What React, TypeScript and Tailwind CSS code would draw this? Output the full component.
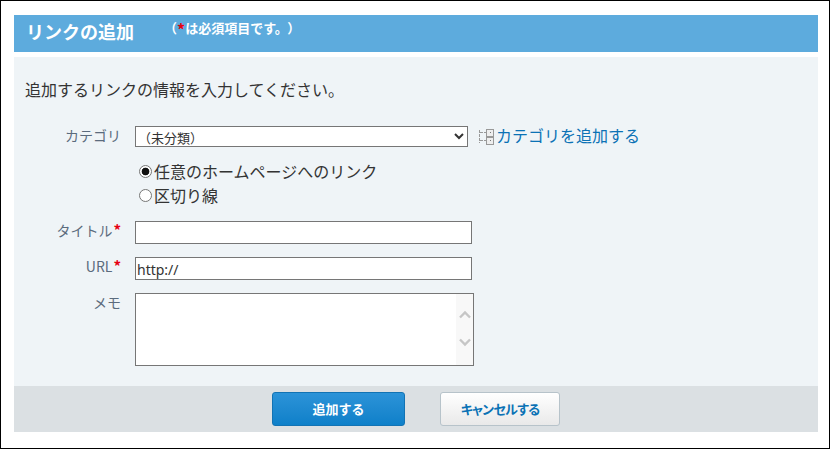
import React from "react";

const font = { fontFamily: '"Noto Sans CJK JP", "Noto Sans", sans-serif' };

function TreeIcon() {
  return (
    <svg width="15" height="16" viewBox="0 0 15 16" className="shrink-0" fill="none" stroke="#999999" strokeWidth="1" shapeRendering="crispEdges">
      <rect x="7.5" y="0.5" width="7" height="6.5" fill="#eeeeee" />
      <rect x="7.5" y="8.5" width="7" height="6.5" fill="#eeeeee" />
      <rect x="10.5" y="3" width="1" height="1" fill="#777777" stroke="none" />
      <rect x="10.5" y="11" width="1" height="1" fill="#777777" stroke="none" />
      <path d="M0.5 1v13M1 3.5h6M1 11.5h6" strokeDasharray="3 1" />
    </svg>
  );
}

function Label({ text, required }: { text: string; required?: boolean }) {
  return (
    <div className="-ml-[11px] -mt-[1px] w-[107px] shrink-0 text-right text-[14px] leading-[20px] text-[#5b6b7d]">
      {text}
      {required && <span className="ml-[1px] text-[15px] font-bold text-[#e60012]">*</span>}
    </div>
  );
}

const radioClass =
  "m-0 mr-[2px] box-border h-[13px] w-[13px] appearance-none rounded-full border border-[#767676] bg-white checked:bg-[radial-gradient(circle,#111111_0,#111111_3.5px,#ffffff_4.2px)]";

export default function App() {
  return (
    <div style={font} className="box-border h-[449px] w-[830px] border border-black bg-white pl-[13px] pr-[11px] pt-[14px]">
      <div className="flex h-[37px] items-start bg-[#5dabdd] pl-[12px] text-white">
        <div className="mt-[3px] w-[138px] text-[18px] leading-[26px] font-bold">リンクの追加</div>
        <div className="mt-[4px] text-[13px] leading-[18px] font-bold">
          （<span className="align-[-3px] text-[16px] text-[#e60012]">*</span>は必須項目です。<span className="ml-[6px]">）</span>
        </div>
      </div>
      <div className="mt-[5px] h-[329px] bg-[#eff4f7] pl-[11px] pt-[21px]">
        <div className="text-[16px] leading-[22px] text-[#333333]">追加するリンクの情報を入力してください。</div>
        <div className="mt-[26px] flex h-[21px] items-start">
          <Label text="カテゴリ" />
          <select className="ml-[14px] box-border h-[21px] w-[333px] border border-[#767676] bg-white pl-0 indent-[-2px] text-[13px] leading-[17px] text-[#333333] [appearance:auto]" style={font}>
            <option>（未分類）</option>
          </select>
          <div className="ml-[11px] flex items-center">
            <TreeIcon />
            <a className="ml-[2px] -mt-[3px] text-[16px] leading-[24px] text-[#0b72b5]">カテゴリを追加する</a>
          </div>
        </div>
        <div className="mt-[12px] ml-[114px] text-[16px] leading-[24px] text-[#333333]">
          <label className="flex h-[24px] items-center">
            <input type="radio" name="kind" defaultChecked className={radioClass} />
            任意のホームページへのリンク
          </label>
          <label className="flex h-[24px] items-center">
            <input type="radio" name="kind" className={radioClass} />
            区切り線
          </label>
        </div>
        <div className="mt-[14px] flex h-[23px] items-start">
          <Label text="タイトル" required />
          <input className="ml-[14px] box-border h-[23px] w-[337px] border border-[#767676] bg-white" />
        </div>
        <div className="mt-[13px] flex h-[23px] items-start">
          <Label text="URL" required />
          <input defaultValue="http://" className="ml-[14px] box-border h-[23px] w-[337px] border border-[#767676] bg-white pl-[1px] pt-[2px] text-[14px] text-[#333333] outline-none" style={{ fontFamily: '"Noto Sans", sans-serif' }} />
        </div>
        <div className="mt-[13px] flex items-start">
          <Label text="メモ" />
          <div className="ml-[14px] box-border flex h-[73px] w-[339px] border border-[#767676] bg-white">
            <textarea className="min-w-0 flex-1 resize-none bg-white outline-none" />
            <div className="flex w-[17px] flex-col items-center bg-[#f8f8f8] pt-[16px] text-[#c6c6c6]">
              <svg width="12" height="9" viewBox="0 0 12 9" fill="none" stroke="currentColor" strokeWidth="2.4"><path d="M1 7.5l5-5 5 5" /></svg>
              <svg className="mt-[19px]" width="12" height="9" viewBox="0 0 12 9" fill="none" stroke="currentColor" strokeWidth="2.4"><path d="M1 1.5l5 5 5-5" /></svg>
            </div>
          </div>
        </div>
      </div>
      <div className="flex h-[46px] items-start bg-[#dbe0e3] pl-[258px] pt-[6px]">
        <button className="box-border h-[34px] w-[133px] rounded-[3px] border border-[#1273b4] bg-gradient-to-b from-[#2b93d8] to-[#0d80c9] text-[13px] font-bold text-white">追加する</button>
        <button className="ml-[35px] box-border h-[34px] w-[120px] rounded-[3px] border border-[#b7c3ca] bg-gradient-to-b from-white to-[#e9e9e9] text-[13px] font-bold tracking-[-0.7px] text-[#0b72b5] [font-feature-settings:'palt']">キャンセルする</button>
      </div>
    </div>
  );
}
